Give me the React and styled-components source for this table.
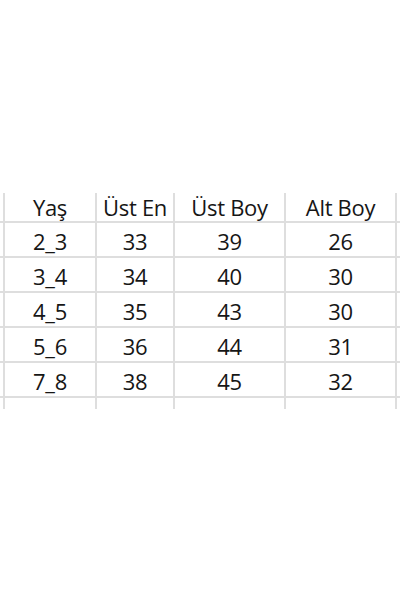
import styled, { createGlobalStyle } from "styled-components";

const GlobalStyle = createGlobalStyle`
  html, body {
    margin: 0;
    padding: 0;
    background: #ffffff;
  }
  body {
    width: 400px;
    height: 600px;
    overflow: hidden;
  }
`;

const Page = styled.div`
  width: 400px;
  height: 600px;
  padding-top: 193px;
  box-sizing: border-box;
  background: #ffffff;
`;

const Sheet = styled.div`
  display: grid;
  grid-template-columns: 5px 92px 78px 111px 111px 3px;
  grid-auto-rows: 35px;
  grid-template-rows: 30px;
  font-family: "Open Sans", "Liberation Sans", sans-serif;
  font-size: 22px;
  color: #161616;
`;

const Cell = styled.div`
  display: flex;
  align-items: center;
  justify-content: center;
  box-sizing: border-box;
  padding-top: ${(p) => (p.$head ? "0" : "3px")};
  border-right: ${(p) => (p.$edge ? "none" : "2px solid #dedede")};
  border-bottom: ${(p) => (p.$open ? "none" : "2px solid #dedede")};
  white-space: nowrap;
  letter-spacing: -0.3px;
`;

const Tail = styled.div`
  display: grid;
  grid-template-columns: 5px 92px 78px 111px 111px 3px;
  height: 11px;
`;

const TailCell = styled.div`
  box-sizing: border-box;
  border-right: ${(p) => (p.$edge ? "none" : "2px solid #dedede")};
`;

const headers = ["Yaş", "Üst En", "Üst Boy", "Alt Boy"];

const rows = [
  ["2_3", "33", "39", "26"],
  ["3_4", "34", "40", "30"],
  ["4_5", "35", "43", "30"],
  ["5_6", "36", "44", "31"],
  ["7_8", "38", "45", "32"],
];

function Row({ values, head }) {
  return (
    <>
      <Cell $head={head} />
      {values.map((v, i) => (
        <Cell key={i} $head={head}>
          {v}
        </Cell>
      ))}
      <Cell $head={head} $edge />
    </>
  );
}

export default function App() {
  return (
    <Page>
      <GlobalStyle />
      <Sheet>
        <Row values={headers} head />
        {rows.map((r) => (
          <Row key={r[0]} values={r} />
        ))}
      </Sheet>
      <Tail>
        <TailCell />
        <TailCell />
        <TailCell />
        <TailCell />
        <TailCell />
        <TailCell $edge />
      </Tail>
    </Page>
  );
}
